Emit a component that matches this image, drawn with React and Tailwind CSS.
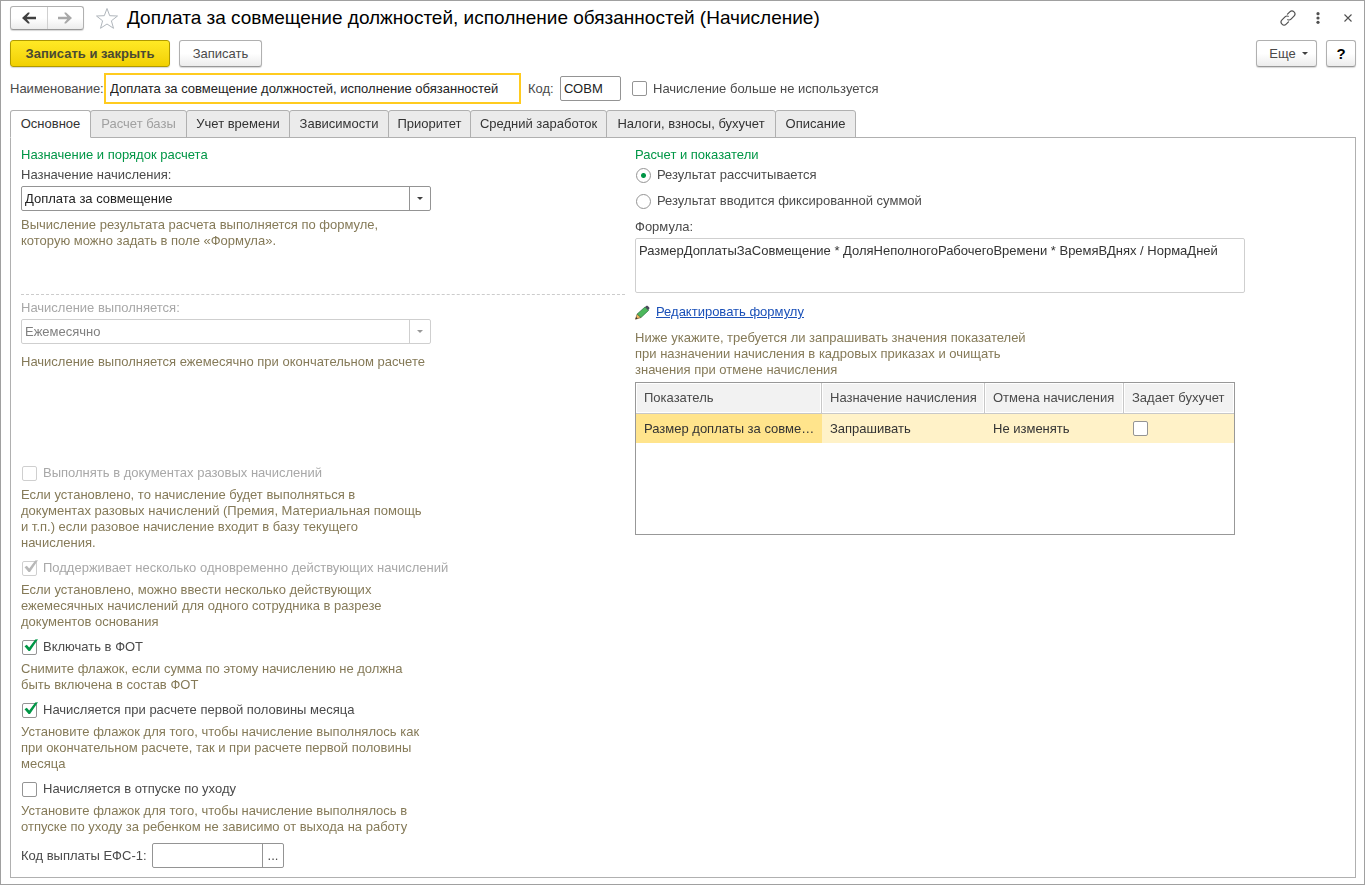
import { useState } from "react";
import clsx from "clsx";

const tabs = [
  { label: "Основное", width: "w-[81px]" },
  { label: "Расчет базы", width: "w-[97px]", disabled: true },
  { label: "Учет времени", width: "w-[104px]" },
  { label: "Зависимости", width: "w-[100px]" },
  { label: "Приоритет", width: "w-[83px]" },
  { label: "Средний заработок", width: "w-[137px]" },
  { label: "Налоги, взносы, бухучет", width: "w-[170px]" },
  { label: "Описание", width: "w-[81px]" },
];

const options = [
  {
    id: "single",
    label: "Выполнять в документах разовых начислений",
    disabled: true,
    hint: "Если установлено, то начисление будет выполняться в\nдокументах разовых начислений (Премия, Материальная помощь\nи т.п.) если разовое начисление входит в базу текущего\nначисления.",
  },
  {
    id: "multiple",
    label: "Поддерживает несколько одновременно действующих начислений",
    disabled: true,
    checked: true,
    hint: "Если установлено, можно ввести несколько действующих\nежемесячных начислений для одного сотрудника в разрезе\nдокументов основания",
  },
  {
    id: "fot",
    label: "Включать в ФОТ",
    checked: true,
    hint: "Снимите флажок, если сумма по этому начислению не должна\nбыть включена в состав ФОТ",
  },
  {
    id: "firstHalf",
    label: "Начисляется при расчете первой половины месяца",
    checked: true,
    hint: "Установите флажок для того, чтобы начисление выполнялось как\nпри окончательном расчете, так и при расчете первой половины\nмесяца",
  },
  {
    id: "careLeave",
    label: "Начисляется в отпуске по уходу",
    hint: "Установите флажок для того, чтобы начисление выполнялось в\nотпуске по уходу за ребенком не зависимо от выхода на работу",
  },
];

const buttonStyle =
  "h-[27px] rounded-[3px] border border-[#b0b0b0] border-b-[#989898] bg-linear-to-b from-white from-50% to-[#ececec] shadow-[0_1px_1px_#d8d8d8]";

function Checkbox({ id, label, disabled, checked }) {
  return (
    <div className="flex h-4 items-center gap-[6px] pl-px">
      <span className="relative flex">
        <input
          id={id}
          type="checkbox"
          defaultChecked={checked}
          disabled={disabled}
          className="peer size-[15px] appearance-none rounded-[2px] border border-[#949494] bg-white disabled:border-[#cfcfcf]"
        />
        <svg
          viewBox="0 0 17 17"
          className="pointer-events-none absolute -top-[2px] left-0 hidden size-[17px] text-[#009646] peer-checked:block peer-disabled:text-[#b8b8b8]"
        >
          <path d="M2.500 8.300 L4.800 6.800 L7.200 9.600 L13.200 1.400 L16 1.200 L8 13 L6.600 13 Z" fill="currentColor" />
        </svg>
      </span>
      <label htmlFor={id} className={clsx("whitespace-nowrap", disabled && "text-[#a8a8a8]")}>
        {label}
      </label>
    </div>
  );
}

function Radio({ id, label, checked }) {
  return (
    <div className="flex h-4 items-center gap-[6px] pl-px">
      <input
        id={id}
        type="radio"
        name="result"
        defaultChecked={checked}
        className="size-[15px] appearance-none rounded-full border border-[#949494] bg-white checked:bg-[radial-gradient(circle,#009646_2px,white_3px)]"
      />
      <label htmlFor={id}>{label}</label>
    </div>
  );
}

function Dropdown({ id, value, disabled }) {
  return (
    <div className="relative w-[410px] max-w-full">
      <select
        id={id}
        disabled={disabled}
        className="block h-[25px] w-full appearance-none rounded-[2px] border border-[#949494] bg-white pl-[3px] text-[#222] opacity-100 disabled:border-[#cfcfcf] disabled:text-[#808080]"
      >
        <option>{value}</option>
      </select>
      <span
        className={clsx(
          "pointer-events-none absolute inset-y-px right-px flex w-[21px] items-center justify-center border-l",
          disabled ? "border-[#cfcfcf] text-[#999]" : "border-[#949494] text-[#404040]"
        )}
      >
        <svg viewBox="0 0 6 3" className="h-[3px] w-[6px]">
          <path d="M0 0h6L3 3z" fill="currentColor" />
        </svg>
      </span>
    </div>
  );
}

function Hint({ children, className }) {
  return <p className={clsx("whitespace-pre-line text-[#857a58]", className)}>{children}</p>;
}

function Header() {
  return (
    <header className="flex h-[26px] items-center">
      <div className="flex h-6 w-[74px] shrink-0 rounded-[3px] border border-[#b0b0b0] border-b-[#989898] bg-linear-to-b from-white from-50% to-[#ececec] shadow-[0_1px_1px_#d8d8d8]">
        <button aria-label="Назад" className="flex flex-1 items-center justify-center border-r border-[#d0d0d0] text-[#404040]">
          <svg viewBox="0 0 14 12" className="h-3 w-[14px]" fill="currentColor">
            <path d="M0 6l6-5.500h1.500v1L4.800 4.800H14v2.400H4.800l2.700 3.300v1H6z" />
          </svg>
        </button>
        <button aria-label="Вперед" className="flex flex-1 items-center justify-center text-[#a8a8a8]">
          <svg viewBox="0 0 14 12" className="h-3 w-[14px]" fill="currentColor">
            <path d="M14 6L8 .5H6.500v1l2.700 3.300H0v2.400h9.200l-2.700 3.300v1H8z" />
          </svg>
        </button>
      </div>
      <button aria-label="В избранное" className="ml-[11px] shrink-0">
        <svg viewBox="0 0 24 23" className="h-[23px] w-6" fill="none" stroke="#b0b6bc" strokeWidth="1">
          <path d="M12 1.500l2.700 7.200 7.800.3-6.100 4.800 2.100 7.500-6.500-4.300-6.500 4.300 2.100-7.500L1.500 9l7.800-.3z" />
        </svg>
      </button>
      <h1 className="ml-2 text-[19px] leading-6 whitespace-nowrap text-black">
        Доплата за совмещение должностей, исполнение обязанностей (Начисление)
      </h1>
      <div className="ml-auto flex items-center text-[#505050]">
        <button aria-label="Получить ссылку">
          <svg viewBox="0 0 16 16" className="size-4" fill="none" stroke="currentColor" strokeWidth="1.2" strokeLinecap="round">
            <path d="M7.500 4.200l2.300-2.300a2.900 2.900 0 0 1 4.200 4.200l-3 3a2.900 2.900 0 0 1-3.200.6" />
            <path d="M8.500 11.800l-2.300 2.300a2.900 2.900 0 0 1-4.200-4.200l3-3a2.900 2.900 0 0 1 3.200-.6" />
          </svg>
        </button>
        <button aria-label="Дополнительно" className="ml-5">
          <svg viewBox="0 0 4 12" className="h-3 w-1" fill="currentColor">
            <circle cx="2" cy="1.700" r="1.600" />
            <circle cx="2" cy="6" r="1.600" />
            <circle cx="2" cy="10.300" r="1.600" />
          </svg>
        </button>
        <button aria-label="Закрыть" className="mr-1 ml-6">
          <svg viewBox="0 0 8 8" className="size-2" fill="none" stroke="currentColor" strokeWidth="1.1">
            <path d="M.5.5l7 7M7.500.5l-7 7" />
          </svg>
        </button>
      </div>
    </header>
  );
}

function Indicators() {
  const head =
    "border-r border-b border-[#c8c8c8] pl-2 text-left font-normal whitespace-nowrap shadow-[inset_0_0_0_1px_white] last:border-r-0";
  return (
    <div className="mt-1 h-[153px] w-[600px] max-w-full border border-[#989898]">
      <table className="w-full table-fixed border-separate border-spacing-0">
        <colgroup>
          <col className="w-[186px]" />
          <col className="w-[163px]" />
          <col className="w-[139px]" />
          <col />
        </colgroup>
        <thead>
          <tr className="h-[31px] bg-[#f2f2f2]">
            <th className={head}>Показатель</th>
            <th className={head}>Назначение начисления</th>
            <th className={head}>Отмена начисления</th>
            <th className={head}>Задает бухучет</th>
          </tr>
        </thead>
        <tbody>
          <tr className="h-[29px] bg-[#fff2c8] whitespace-nowrap text-[#333]">
            <td className="bg-[#ffe48c] pl-2">Размер доплаты за совме…</td>
            <td className="pl-2">Запрашивать</td>
            <td className="pl-2">Не изменять</td>
            <td className="pl-[9px]">
              <input
                type="checkbox"
                aria-label="Задает бухучет"
                className="block size-[15px] appearance-none rounded-[2px] border border-[#949494] bg-white"
              />
            </td>
          </tr>
        </tbody>
      </table>
    </div>
  );
}

export default function App() {
  const [active, setActive] = useState("Основное");

  return (
    <div className="flex min-h-screen flex-col border border-[#a0a0a0] bg-white pt-1 pr-2 pb-[6px] pl-[9px] font-['Liberation_Sans',Arial,sans-serif] text-[13px] leading-4 text-[#4a4a4a]">
      <Header />

      <div className="mt-[9px] flex items-center gap-[9px]">
        <button className="h-[27px] w-40 rounded-[3px] border border-[#b09a00] bg-linear-to-b from-[#ffe924] to-[#f2d000] font-bold text-[#4a4a32] shadow-[0_1px_1px_#d8d8d8]">
          Записать и закрыть
        </button>
        <button className={clsx(buttonStyle, "w-[83px]")}>Записать</button>
        <button className={clsx(buttonStyle, "ml-auto flex w-[61px] items-center justify-center gap-[6px] pl-1")}>
          Еще
          <svg viewBox="0 0 6 3" className="h-[3px] w-[6px]">
            <path d="M0 0h6L3 3z" fill="#404040" />
          </svg>
        </button>
        <button className={clsx(buttonStyle, "w-[30px] text-[15px] font-bold text-black")}>?</button>
      </div>

      <div className="mt-[6px] flex h-[31px] items-center">
        <label htmlFor="name" className="w-[94px] shrink-0 whitespace-nowrap">
          Наименование:
        </label>
        <input
          id="name"
          autoFocus
          defaultValue="Доплата за совмещение должностей, исполнение обязанностей"
          className="h-[31px] w-[417px] border-2 border-[#ffcb1f] pl-1 text-[#222] outline-none"
        />
        <label htmlFor="code" className="ml-[7px] w-8 shrink-0">
          Код:
        </label>
        <input
          id="code"
          defaultValue="СОВМ"
          className="mr-[10px] h-[25px] w-[61px] rounded-[2px] border border-[#949494] pl-[3px] text-[#222] outline-none"
        />
        <Checkbox id="unused" label="Начисление больше не используется" />
      </div>

      <div role="tablist" className="mt-[6px] flex h-7 items-stretch">
        {tabs.map(({ label, width, disabled }) => (
          <button
            key={label}
            role="tab"
            aria-selected={active === label}
            disabled={disabled}
            onClick={() => setActive(label)}
            className={clsx(
              "-mr-px shrink-0 rounded-t-[3px] border border-[#b0b0b0] text-center whitespace-nowrap",
              width,
              active === label ? "z-10 border-b-white bg-white" : "bg-[#ebebeb]",
              disabled ? "text-[#a0a0a0]" : "text-[#333]"
            )}
          >
            {label}
          </button>
        ))}
      </div>

      <main className="-mt-px grid flex-1 grid-cols-[604px_1fr] gap-[10px] border border-[#b0b0b0] px-[10px] pt-[9px] pb-[9px]">
        <section>
          <h2 className="text-[#009646]">Назначение и порядок расчета</h2>
          <label htmlFor="purpose" className="mt-1 mb-[3px] block">
            Назначение начисления:
          </label>
          <Dropdown id="purpose" value="Доплата за совмещение" />
          <Hint className="mt-[6px] h-[77px]">
            {"Вычисление результата расчета выполняется по формуле,\nкоторую можно задать в поле «Формула»."}
          </Hint>

          <div className="border-t border-dashed border-[#ccc] pt-[5px]">
            <label htmlFor="period" className="mb-[3px] block text-[#a8a8a8]">
              Начисление выполняется:
            </label>
            <Dropdown id="period" value="Ежемесячно" disabled />
            <Hint className="mt-[10px] h-[111px]">Начисление выполняется ежемесячно при окончательном расчете</Hint>
          </div>

          <div className="flex flex-col gap-[9px]">
            {options.map(({ hint, ...option }) => (
              <div key={option.id}>
                <Checkbox {...option} />
                <Hint className="mt-[6px]">{hint}</Hint>
              </div>
            ))}
          </div>

          <div className="mt-2 flex items-center">
            <label htmlFor="efs" className="w-[131px]">
              Код выплаты ЕФС-1:
            </label>
            <div className="flex h-[25px] w-[132px] rounded-[2px] border border-[#949494]">
              <input id="efs" className="min-w-0 flex-1 px-[3px] outline-none" />
              <button aria-label="Выбрать код" className="w-[21px] border-l border-[#949494]">
                ...
              </button>
            </div>
          </div>
        </section>

        <section>
          <h2 className="text-[#009646]">Расчет и показатели</h2>
          <div className="mt-1 flex flex-col gap-[10px]">
            <Radio id="calculated" label="Результат рассчитывается" checked />
            <Radio id="fixed" label="Результат вводится фиксированной суммой" />
          </div>
          <label htmlFor="formula" className="mt-[10px] mb-[3px] block">
            Формула:
          </label>
          <textarea
            id="formula"
            readOnly
            value="РазмерДоплатыЗаСовмещение * ДоляНеполногоРабочегоВремени * ВремяВДнях / НормаДней"
            className="block h-[55px] w-[610px] max-w-full resize-none rounded-[2px] border border-[#cfcfcf] px-[3px] py-1 text-[#333] outline-none"
          />
          <div className="mt-[11px] flex h-4 items-center gap-[6px]">
            <svg viewBox="0 0 15 15" className="size-[15px]">
              <path d="M.5 14.200l1.700-5.200 3.800 3.500z" fill="#f0b860" stroke="#7a5a30" strokeWidth=".7" />
              <path d="M.5 14.200l.7-2.200 1.500 1.400z" fill="#333" />
              <path d="M2.200 9l7.800-7 3.500 3.500-7.500 7z" fill="#4cb85c" stroke="#2d7040" strokeWidth=".7" />
              <path d="M10 2l1.500-1.300h1l1.800 1.800v1l-1 1.800z" fill="#4a4a5c" />
            </svg>
            <a href="#formula" className="text-[#1a50b8] underline">
              Редактировать формулу
            </a>
          </div>
          <Hint className="mt-[10px]">
            {"Ниже укажите, требуется ли запрашивать значения показателей\nпри назначении начисления в кадровых приказах и очищать\nзначения при отмене начисления"}
          </Hint>
          <Indicators />
        </section>
      </main>
    </div>
  );
}
